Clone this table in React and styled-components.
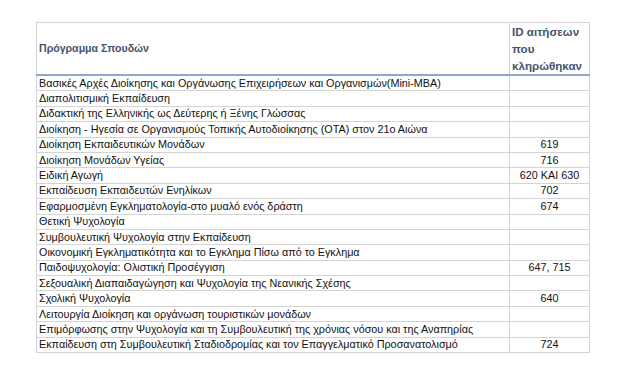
import React from 'react';
import styled, { createGlobalStyle } from 'styled-components';

const rows = [
  ['Βασικές Αρχές Διοίκησης και Οργάνωσης Επιχειρήσεων και Οργανισμών(Mini-MBA)', ''],
  ['Διαπολιτισμική Εκπαίδευση', ''],
  ['Διδακτική της Ελληνικής ως Δεύτερης ή Ξένης Γλώσσας', ''],
  ['Διοίκηση - Ηγεσία σε Οργανισμούς Τοπικής Αυτοδιοίκησης (ΟΤΑ) στον 21ο Αιώνα', ''],
  ['Διοίκηση Εκπαιδευτικών Μονάδων', '619'],
  ['Διοίκηση Μονάδων Υγείας', '716'],
  ['Ειδική Αγωγή', '620 ΚΑΙ 630'],
  ['Εκπαίδευση Εκπαιδευτών Ενηλίκων', '702'],
  ['Εφαρμοσμένη Εγκληματολογία-στο μυαλό ενός δράστη', '674'],
  ['Θετική Ψυχολογία', ''],
  ['Συμβουλευτική Ψυχολογία στην Εκπαίδευση', ''],
  ['Οικονομική Εγκληματικότητα και το Εγκλημα Πίσω από το Εγκλημα', ''],
  ['Παιδοψυχολογία: Ολιστική Προσέγγιση', '647, 715'],
  ['Σεξουαλική Διαπαιδαγώγηση και Ψυχολογία της Νεανικής Σχέσης', ''],
  ['Σχολική Ψυχολογία', '640'],
  ['Λειτουργία Διοίκηση και οργάνωση τουριστικών μονάδων', ''],
  ['Επιμόρφωσης στην Ψυχολογία και τη Συμβουλευτική της χρόνιας νόσου και της Αναπηρίας', ''],
  ['Εκπαίδευση στη Συμβουλευτική Σταδιοδρομίας και τον Επαγγελματικό Προσανατολισμό', '724'],
];

const GlobalStyle = createGlobalStyle`
  body {
    margin: 0;
    background: #ffffff;
    font-family: 'Liberation Sans', Arial, sans-serif;
  }
`;

const Page = styled.div`
  width: 643px;
  height: 376px;
  padding: 22px 0 0 36px;
  box-sizing: border-box;
`;

const Table = styled.table`
  border-collapse: collapse;
  table-layout: fixed;
  width: 553px;
  font-family: 'Liberation Sans', Arial, sans-serif;
  font-size: 10.8px;
  color: #111;
`;

const Col = styled.col`
  width: ${(p) => p.$w}px;
`;

const HeadCell = styled.th`
  height: 48px;
  padding: 0 2px;
  text-align: left;
  vertical-align: ${(p) => (p.$top ? 'top' : 'middle')};
  font-weight: bold;
  font-size: ${(p) => p.$size}px;
  line-height: 17px;
  color: #44546a;
  white-space: nowrap;
  border: 1px solid #d4d4d4;
  border-bottom: 2px solid #8ea9c8;
`;

const Cell = styled.td`
  height: 14.4px;
  padding: 0 2px;
  line-height: 13px;
  white-space: nowrap;
  overflow: hidden;
  text-align: ${(p) => (p.$center ? 'center' : 'left')};
  border: 1px solid #d4d4d4;
`;

export default function App() {
  return (
    <>
      <GlobalStyle />
      <Page>
        <Table>
          <colgroup>
            <Col $w={473} />
            <Col $w={80} />
          </colgroup>
          <thead>
            <tr>
              <HeadCell $size={10.6}>Πρόγραμμα Σπουδών</HeadCell>
              <HeadCell $size={11.6} $top>
                ID αιτήσεων
                <br />
                που
                <br />
                κληρώθηκαν
              </HeadCell>
            </tr>
          </thead>
          <tbody>
            {rows.map(([name, id]) => (
              <tr key={name}>
                <Cell>{name}</Cell>
                <Cell $center>{id}</Cell>
              </tr>
            ))}
          </tbody>
        </Table>
      </Page>
    </>
  );
}
